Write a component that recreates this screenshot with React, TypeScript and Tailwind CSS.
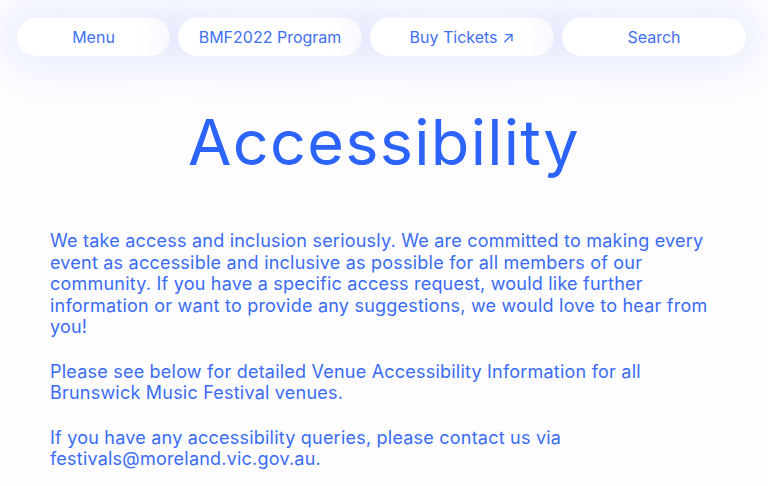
export default function App() {
  const tabs = [
    { label: "Menu", w: "w-[153px]" },
    { label: "BMF2022 Program", w: "w-[184px]" },
    { label: "Buy Tickets ↗", w: "w-[184px]" },
    { label: "Search", w: "w-[184px]" },
  ];

  return (
    <div
      className="w-full min-h-screen bg-[#fdfdff] text-[#3a6cf4]"
      style={{ fontFamily: "Inter, 'Liberation Sans', sans-serif" }}
    >
      {/* Top nav pills */}
      <nav className="flex gap-2 pl-[17px] pt-[18px]">
        {tabs.map((t) => (
          <button
            key={t.label}
            className={`${t.w} h-[38px] rounded-full bg-white text-[16px] text-[#3f6ff2] shadow-[0_0_36px_14px_rgba(90,120,240,0.11)]`}
          >
            {t.label}
          </button>
        ))}
      </nav>

      {/* Heading */}
      <h1 className="mt-[55px] text-center text-[63px] leading-none text-[#2b63fb] tracking-[0.02em]">
        Accessibility
      </h1>

      {/* Body copy */}
      <div className="mt-[56px] pl-[50px] pr-[40px] text-[18px] leading-[21.5px] tracking-[0.012em] space-y-[23px]">
        <p>
          We take access and inclusion seriously. We are committed to making every
          event as accessible and inclusive as possible for all members of our
          community. If you have a specific access request, would like further
          information or want to provide any suggestions, we would love to hear from
          you!
        </p>
        <p>
          Please see below for detailed Venue Accessibility Information for all
          Brunswick Music Festival venues.
        </p>
        <p>
          If you have any accessibility queries, please contact us via
          festivals@moreland.vic.gov.au.
        </p>
      </div>
    </div>
  );
}
